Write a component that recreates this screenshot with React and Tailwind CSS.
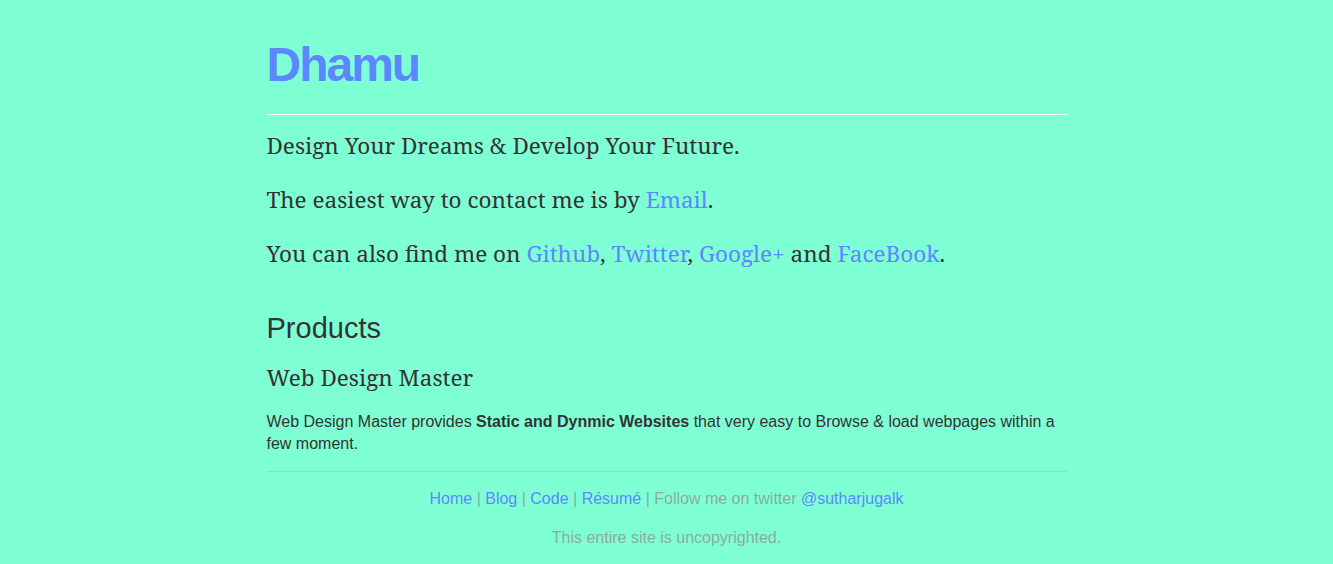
export default function App() {
  const link = "text-[#5c87ff] no-underline";
  return (
    <div className="min-h-screen bg-[#7fffd4] text-[#333]">
      <div className="w-[800px] mx-auto pt-[30px]">
        <h1 className="text-[48px] leading-[70px] font-bold tracking-[-2px] text-[#5c87ff] [font-family:'Liberation_Sans',Arial,sans-serif]">
          Dhamu
        </h1>
        <div className="mt-[14px] h-px bg-white"></div>
        <div className="[font-family:'Noto_Serif','DejaVu_Serif',serif] text-[22.5px] leading-[30px]">
          <p className="mt-[16px]">Design Your Dreams &amp; Develop Your Future.</p>
          <p className="mt-[24px]">
            The easiest way to contact me is by <a className={link} href="#">Email</a>.
          </p>
          <p className="mt-[24px]">
            You can also find me on <a className={link} href="#">Github</a>, <a className={link} href="#">Twitter</a>,{" "}
            <a className={link} href="#">Google+</a> and <a className={link} href="#">FaceBook</a>.
          </p>
        </div>
        <h2 className="mt-[39px] text-[29px] leading-[40px] [font-family:'Liberation_Sans',Arial,sans-serif]">Products</h2>
        <h3 className="mt-[15px] text-[22.5px] leading-[30px] [font-family:'Noto_Serif','DejaVu_Serif',serif]">Web Design Master</h3>
        <p className="mt-[18px] text-[16px] leading-[22px] [font-family:'Liberation_Sans',Arial,sans-serif]">
          Web Design Master provides <strong>Static and Dynmic Websites</strong> that very easy to Browse &amp; load webpages within a few moment.
        </p>
        <div className="mt-[16px] h-px bg-[#6feec4]"></div>
        <div className="text-center text-[16px] text-[#8aaca0] [font-family:'Liberation_Sans',Arial,sans-serif]">
          <p className="mt-[16px] leading-[22px]">
            <a className={link} href="#">Home</a> | <a className={link} href="#">Blog</a> | <a className={link} href="#">Code</a> |{" "}
            <a className={link} href="#">Résumé</a> | Follow me on twitter <a className={link} href="#">@sutharjugalk</a>
          </p>
          <p className="mt-[17px] leading-[22px]">This entire site is uncopyrighted.</p>
        </div>
      </div>
    </div>
  );
}
